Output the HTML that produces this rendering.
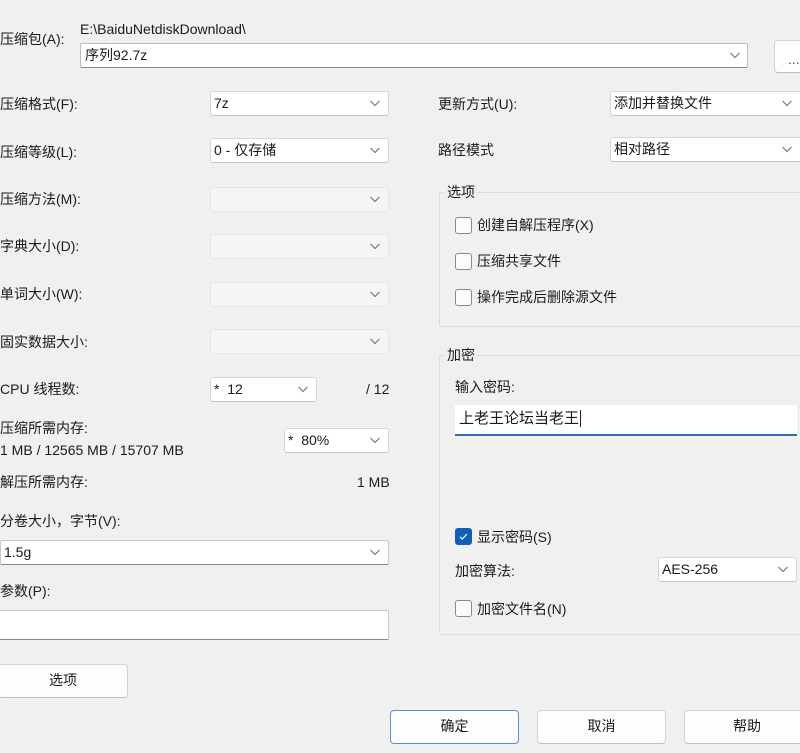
<!DOCTYPE html>
<html><head><meta charset="utf-8"><style>
*{box-sizing:border-box;margin:0;padding:0}
body{width:800px;height:753px;background:#f0f0f0;position:relative;overflow:hidden;font-family:"Liberation Sans","Noto Sans CJK SC",sans-serif;font-size:14px;color:#1a1a1a}
.a{position:absolute;white-space:nowrap}
.t{line-height:20px}
.sel{position:absolute;background:#fff;border:1px solid #d6d6d6;border-bottom-color:#c4c4c4;border-radius:3px;line-height:22px;padding-left:3px}
.sel.d{background:#f5f5f5;border-color:#e6e6e6}
.chev{position:absolute;right:7px;top:6px;width:12px;height:10px}
.inp{position:absolute;background:#fff;border:1px solid #c8c8c8;border-bottom-color:#9a9a9a;border-radius:2px}
.cb{position:absolute;width:17px;height:17px;border:1px solid #8a8a8a;border-radius:3px;background:#fbfbfb}
.grp{position:absolute;border:1px solid #dcdcdc;border-radius:3px}
.btn{position:absolute;background:#fdfdfd;border:1px solid #d3d3d3;border-bottom-color:#c0c0c0;border-radius:4px;text-align:center;line-height:31px}
</style></head><body>
<svg width="0" height="0" style="position:absolute"><defs><symbol id="cv" viewBox="0 0 12 10"><path d="M1.5 3 L6 7.5 L10.5 3" fill="none" stroke="#707070" stroke-width="1.1"/></symbol></defs></svg>

<div class="a t" style="left:80px;top:19px">E:\BaiduNetdiskDownload\</div>
<div class="a t" style="left:0;top:29px">压缩包(A):</div>
<div class="inp" style="left:80px;top:43px;width:668px;height:25px;line-height:23px;padding-left:4px;border-color:#bdbdbd;border-bottom-color:#888">序列92.7z<svg class="chev" style="top:6px;right:6px"><use href="#cv"/></svg></div>
<div class="btn" style="left:774px;top:40px;width:40px;height:33px;line-height:36px;text-align:left;padding-left:13px;color:#555">...</div>

<div class="a t" style="left:0;top:94px">压缩格式(F):</div>
<div class="sel" style="left:210px;top:91px;width:179px;height:25px">7z<svg class="chev"><use href="#cv"/></svg></div>
<div class="a t" style="left:0;top:142px">压缩等级(L):</div>
<div class="sel" style="left:210px;top:138px;width:179px;height:25px">0 - 仅存储<svg class="chev"><use href="#cv"/></svg></div>
<div class="a t" style="left:0;top:189px">压缩方法(M):</div>
<div class="sel d" style="left:210px;top:187px;width:179px;height:25px"><svg class="chev"><use href="#cv"/></svg></div>
<div class="a t" style="left:0;top:236px">字典大小(D):</div>
<div class="sel d" style="left:210px;top:234px;width:179px;height:25px"><svg class="chev"><use href="#cv"/></svg></div>
<div class="a t" style="left:0;top:284px">单词大小(W):</div>
<div class="sel d" style="left:210px;top:282px;width:179px;height:25px"><svg class="chev"><use href="#cv"/></svg></div>
<div class="a t" style="left:0;top:332px">固实数据大小:</div>
<div class="sel d" style="left:210px;top:329px;width:179px;height:25px"><svg class="chev"><use href="#cv"/></svg></div>

<div class="a t" style="left:0;top:379px">CPU 线程数:</div>
<div class="sel" style="left:210px;top:377px;width:107px;height:25px">*&nbsp; 12<svg class="chev"><use href="#cv"/></svg></div>
<div class="a t" style="left:366px;top:379px">/ 12</div>
<div class="a t" style="left:0;top:418px">压缩所需内存:</div>
<div class="a t" style="left:0;top:440px">1 MB / 12565 MB / 15707 MB</div>
<div class="sel" style="left:284px;top:428px;width:105px;height:25px">*&nbsp; 80%<svg class="chev"><use href="#cv"/></svg></div>
<div class="a t" style="left:0;top:472px">解压所需内存:</div>
<div class="a t" style="left:357px;top:472px">1 MB</div>

<div class="a t" style="left:0;top:511px">分卷大小，字节(V):</div>
<div class="inp" style="left:0;top:540px;width:389px;height:25px;line-height:23px;padding-left:3px;border-bottom-color:#888">1.5g<svg class="chev" style="top:6px"><use href="#cv"/></svg></div>
<div class="a t" style="left:0;top:581px">参数(P):</div>
<div class="inp" style="left:-2px;top:610px;width:391px;height:30px;border-bottom-color:#888"></div>
<div class="btn" style="left:-2px;top:664px;width:130px;height:34px">选项</div>

<div class="a t" style="left:438px;top:94px">更新方式(U):</div>
<div class="sel" style="left:610px;top:91px;width:200px;height:25px">添加并替换文件<svg class="chev" style="right:16px"><use href="#cv"/></svg></div>
<div class="a t" style="left:438px;top:140px">路径模式</div>
<div class="sel" style="left:610px;top:137px;width:200px;height:25px">相对路径<svg class="chev" style="right:16px"><use href="#cv"/></svg></div>

<div class="grp" style="left:439px;top:192px;width:370px;height:135px"></div>
<div class="a t" style="left:445px;top:182px;background:#f0f0f0;padding:0 2px">选项</div>
<div class="cb" style="left:455px;top:217px"></div><div class="a t" style="left:477px;top:215px">创建自解压程序(X)</div>
<div class="cb" style="left:455px;top:253px"></div><div class="a t" style="left:477px;top:251px">压缩共享文件</div>
<div class="cb" style="left:455px;top:289px"></div><div class="a t" style="left:477px;top:287px">操作完成后删除源文件</div>

<div class="grp" style="left:439px;top:355px;width:370px;height:280px"></div>
<div class="a t" style="left:445px;top:345px;background:#f0f0f0;padding:0 2px">加密</div>
<div class="a t" style="left:455px;top:377px">输入密码:</div>
<div class="a" style="left:455px;top:405px;width:342px;height:31px;background:#fff;border-bottom:2px solid #2d6db5;line-height:28px;padding-left:4px;font-size:15px">上老王论坛当老王<span style="border-left:1px solid #222;margin-left:1px"></span></div>
<div class="cb" style="left:455px;top:528px;background:#0f5fb8;border-color:#0f5fb8"><svg width="15" height="15" viewBox="0 0 15 15" style="position:absolute;left:0;top:0"><path d="M4 7.8 L6.3 10 L11 5" fill="none" stroke="#fff" stroke-width="1.2"/></svg></div>
<div class="a t" style="left:477px;top:527px">显示密码(S)</div>
<div class="a t" style="left:455px;top:561px">加密算法:</div>
<div class="sel" style="left:658px;top:557px;width:139px;height:25px">AES-256<svg class="chev"><use href="#cv"/></svg></div>
<div class="cb" style="left:455px;top:600px"></div><div class="a t" style="left:477px;top:599px">加密文件名(N)</div>

<div class="btn" style="left:390px;top:710px;width:129px;height:34px;border:1px solid #5b8fc7">确定</div>
<div class="btn" style="left:537px;top:710px;width:129px;height:34px">取消</div>
<div class="btn" style="left:684px;top:710px;width:129px;height:34px;text-align:left;padding-left:48px">帮助</div>
</body></html>
